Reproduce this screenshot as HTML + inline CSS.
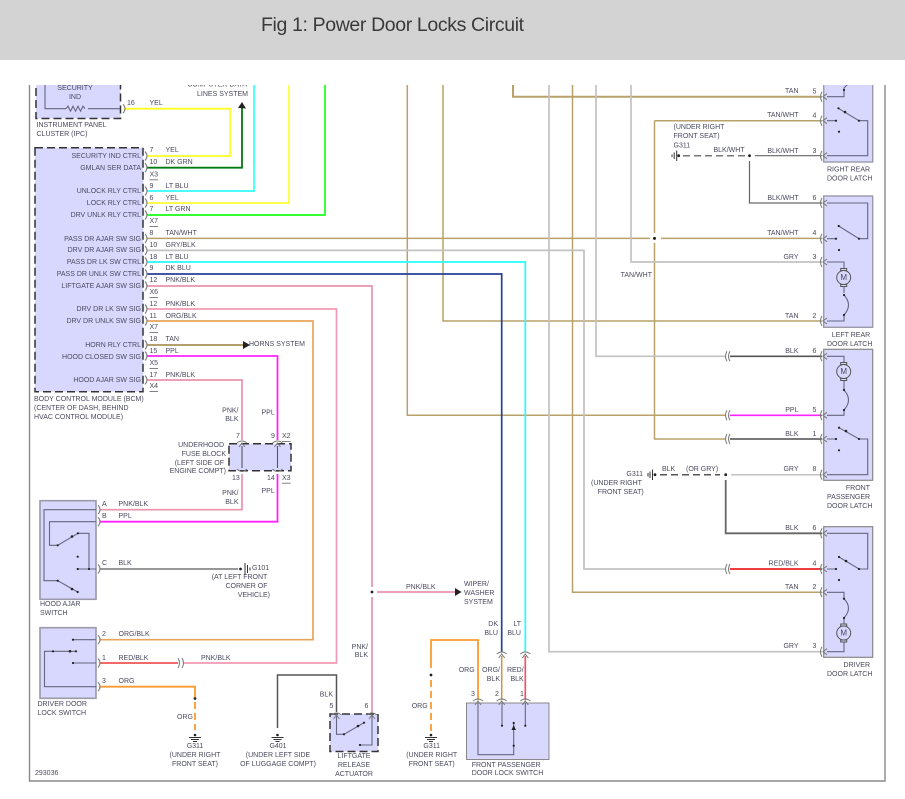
<!DOCTYPE html>
<html><head><meta charset="utf-8"><style>
html,body{margin:0;padding:0;background:#fff;width:905px;height:799px;overflow:hidden}
#h{position:absolute;left:0;top:0;width:905px;height:60px;background:#d3d3d3}
#t{position:absolute;left:261px;top:12px;font:19.5px/26px "Liberation Sans",sans-serif;letter-spacing:-.37px;color:#3a3a3a;white-space:nowrap}
svg{position:absolute;left:0;top:0;filter:blur(.3px)}
text{font-family:"Liberation Sans",sans-serif;font-size:7px;fill:#4a4a5e;dominant-baseline:central}
.e{text-anchor:end}.m{text-anchor:middle}
.w{fill:none;stroke-linejoin:miter}
</style></head><body>
<div id="h"></div><div id="t">Fig 1: Power Door Locks Circuit</div>
<svg width="905" height="799" viewBox="0 0 905 799">
<defs>
<clipPath id="c"><rect x="0" y="85" width="905" height="714"/></clipPath>
<g id="pr" fill="none" stroke="#777" stroke-width="1"><path d="M-1,-5Q-4,0 -1,5M4,-3L0,0L4,3"/></g>
<g id="pl" fill="none" stroke="#777" stroke-width="1"><path d="M-1,-4.5Q3,0 -1,4.5"/></g>
<g id="dl" fill="none" stroke="#777" stroke-width="1"><path d="M0,-5Q-3,0 0,5M3,-5Q0,0 3,5"/></g>
<g id="pu" fill="none" stroke="#777" stroke-width="1"><path d="M-5,0Q0,-4 5,0M-3,4L0,0L3,4"/></g>
<g id="gv" stroke="#333" stroke-width="1"><circle cx="0" cy="0" r="1.3" fill="#222" stroke="none"/><path d="M-6,2.5H6M-4,4.5H4M-2,6.5H2"/></g>
<g id="mot" fill="none" stroke="#555" stroke-width="1"><circle r="7"/><path d="M-3,-9H3V-7H-3ZM-3,7H3V9H-3Z"/></g>
</defs>
<g clip-path="url(#c)">
<path d="M29.5,85V781H885V85" fill="none" stroke="#8a8a8a" stroke-width="1.4"/>
<!-- boxes -->
<g fill="#d8d8ff">
<rect x="36" y="70" width="84.500" height="48.500" stroke="#333" stroke-width="1.500" stroke-dasharray="8 4"/>
<rect x="35" y="147.700" width="108" height="244" stroke="#333" stroke-width="1.500" stroke-dasharray="8 4"/>
<rect x="229" y="443.700" width="62" height="27" stroke="#333" stroke-width="1.500" stroke-dasharray="8 4"/>
<rect x="330" y="714" width="48" height="37.500" stroke="#333" stroke-width="1.500" stroke-dasharray="8 4"/>
<rect x="40" y="500.700" width="56" height="98.600" stroke="#9a9aaa" stroke-width="1.600"/>
<rect x="40" y="627.700" width="56" height="70.600" stroke="#9a9aaa" stroke-width="1.600"/>
<rect x="466.500" y="703" width="82.500" height="56.500" stroke="#888" stroke-width="1"/>
<rect x="823.700" y="60" width="49" height="102" stroke="#9a9aaa" stroke-width="1.400"/>
<rect x="823.700" y="196" width="49" height="131.300" stroke="#9a9aaa" stroke-width="1.400"/>
<rect x="823.700" y="349.300" width="49" height="131" stroke="#888" stroke-width="1.200"/>
<rect x="823.700" y="526.700" width="49" height="130.600" stroke="#888" stroke-width="1.200"/>
</g>
<!-- wires -->
<g class="w" stroke-width="1.5">
<path d="M407.300,85V415.300H725M443,85V321H822M572.500,85V592.300H822M654.500,120.700H822M654.500,120.700V233M654.500,243V439H725M147,238.400H650M661,238.400H822" stroke="#b8a26a"/>
<path d="M513,85V96.700H822" stroke="#b8a26a" stroke-width="2"/>
<path d="M549,85V651.700H822M596,85V356.300H725M631,85V262H822M147,250.400H584V569H725" stroke="#c2c2c2" stroke-width="1.700"/>
<path d="M147,262H525.300V652" stroke="#22ffff" stroke-width="1.700"/>
<path d="M147,274H501.700V652" stroke="#2a3f9a" stroke-width="1.700"/>
<path d="M147,286H372V587M372,597V713M377,592H455" stroke="#ea92ab" stroke-width="1.700"/>
<path d="M147,309H336.500V663H183" stroke="#f29ab4" stroke-width="1.700"/>
<path d="M147,321H313V639.700H100" stroke="#e8a45a" stroke-width="1.700"/>
<path d="M147,345H243" stroke="#a89058" stroke-width="1.700"/>
<path d="M147,356H277.500V440M277.500,474V521.700H100" stroke="#ff22ff" stroke-width="1.800"/>
<path d="M147,380H242V440M242,474V509.700H100" stroke="#ea92ab" stroke-width="1.700"/>
<path d="M124,108.700H230V156H147" stroke="#ffff22" stroke-width="1.800"/>
<path d="M147,167.700H242V108" stroke="#007a10" stroke-width="1.800"/>
<path d="M147,191H254V85" stroke="#33ffff" stroke-width="1.700"/>
<path d="M147,203H289V85" stroke="#ffff33" stroke-width="1.700"/>
<path d="M147,215H325V85" stroke="#33ff33" stroke-width="1.900"/>
<path d="M100,569H238" stroke="#777" stroke-width="1.500"/>
<path d="M100,663H178" stroke="#ee5555" stroke-width="1.700"/>
<path d="M100,686.700H195V697" stroke="#fb9a30" stroke-width="1.800"/>
<path d="M195,702V730" stroke="#fb9a30" stroke-width="1.800" stroke-dasharray="7 4"/>
<path d="M277.500,728V675H336.500V712" stroke="#555"/>
<path d="M431,668V640H478V700" stroke="#fb9a30" stroke-width="1.800"/>
<path d="M431,680V732" stroke="#fb9a30" stroke-width="1.800" stroke-dasharray="7 4"/>
<path d="M501.700,656V700" stroke="#c89848"/>
<path d="M525.300,656V700" stroke="#ee5566" stroke-width="1.700"/>
<path d="M683,155.700H745" stroke="#777" stroke-dasharray="7 4"/>
<path d="M755,155.700H822M749.500,161V203H822" stroke="#666" stroke-width="1.200"/>
<path d="M730,356.300H822" stroke="#555" stroke-width="1.600"/>
<path d="M730,415.300H822" stroke="#ff22ff" stroke-width="1.600"/>
<path d="M730,439H822" stroke="#666" stroke-width="1.800"/>
<path d="M731,474.700H822" stroke="#c2c2c2"/>
<path d="M660,474.700H720" stroke="#555" stroke-dasharray="7 4"/>
<path d="M725.700,480V533.300H822" stroke="#666" stroke-width="1.800"/>
<path d="M730,569H822" stroke="#ee2222" stroke-width="1.800"/>
</g>
<!-- inner wiring -->
<g fill="none" stroke="#666680" stroke-width="1.100">
<path d="M45,70V108.700H66M88,108.700H120"/>
<path d="M66,108.700l2,-2.500 2.500,5 2.500,-5 2.500,5 2.500,-5 2.500,5 2.500,-5 2,2.500"/>
<path d="M242,446V468M277.500,446V468" stroke="#555"/>
<path d="M96,509.700H44V580.700H57.700L77.700,592M96,521.700H49.500V545.300H57.700L78,533.300H89V569M78,569H96"/>
<path d="M73,639.700H96M73,663H96M96,686.700H44.500V651.300H76"/>
<path d="M478,703V754.700H513.700V723M502,703V725.700M525.300,703V725.700"/>
<path d="M336.500,714V734.300H344L364,722.700M372,714V745H360"/>
<path d="M827,96.700H844V88L850,82M827,120.700H836M838.300,108.300L859,120.700H867.700V155.700H827"/>
<path d="M827,203H867.700V238.700H859L838.700,226M827,238.700H836M827,262H844V269M844,286V293M844,295Q853,305 844,315V321H827"/>
<path d="M827,356.300H844V362M844,381V390Q853,400 844,410V415.300H827M827,439H836M839,427.700L859,439H867.700V474.700H827"/>
<path d="M827,533.300H867.700V569H859L839,557M827,569H836M827,592.300H844V598.700Q853,608 844,618V624M844,642V651.700H827"/>
</g>
<use href="#mot" x="843.700" y="277.500"/><use href="#mot" x="843.700" y="371.500"/><use href="#mot" x="843.700" y="633"/>
<!-- dots -->
<g fill="#222">
<circle cx="57.700" cy="545.300" r="1.100"/><circle cx="78" cy="533.300" r="1.100"/><circle cx="72" cy="536.500" r="1.300"/><circle cx="77.700" cy="556.700" r="1.100"/><circle cx="77.700" cy="569" r="1.100"/><circle cx="89" cy="569" r="1.100"/><circle cx="57.700" cy="580.700" r="1.100"/><circle cx="77.700" cy="592" r="1.100"/><circle cx="72" cy="589" r="1.300"/>
<circle cx="73" cy="639.700" r="1.100"/><circle cx="73" cy="663" r="1.100"/><circle cx="53" cy="651.300" r="1.100"/><circle cx="70" cy="651.300" r="1.300"/><circle cx="76" cy="651.300" r="1.100"/>
<circle cx="195" cy="698.500" r="1.400"/><circle cx="372" cy="592" r="1.400"/><circle cx="431" cy="675" r="1.400"/><circle cx="654.500" cy="238.400" r="1.500"/><circle cx="749.500" cy="155.700" r="1.400"/><circle cx="725.700" cy="474.700" r="1.400"/>
<circle cx="502" cy="725.700" r="1.100"/><circle cx="525.300" cy="725.700" r="1.100"/><circle cx="513.700" cy="723" r="1.100"/><circle cx="513.700" cy="745.700" r="1.100"/><path d="M511.500,730L513.700,725L515.900,730Z"/>
<circle cx="344" cy="734.300" r="1.100"/><circle cx="364" cy="722.700" r="1.100"/><circle cx="360" cy="745" r="1.100"/><circle cx="358" cy="726" r="1.300"/>
<circle cx="836" cy="120.700" r="1.100"/><circle cx="838.500" cy="108.300" r="1.100"/><circle cx="845" cy="112" r="1.300"/><circle cx="859" cy="120.700" r="1.100"/><circle cx="839" cy="131.700" r="1.100"/><circle cx="844" cy="90" r="1.100"/>
<circle cx="836" cy="238.700" r="1.100"/><circle cx="838.700" cy="226" r="1.100"/><circle cx="859" cy="238.700" r="1.100"/><circle cx="839" cy="250" r="1.100"/><circle cx="844" cy="295" r="1.100"/><circle cx="844" cy="315" r="1.100"/>
<circle cx="844" cy="390" r="1.100"/><circle cx="844" cy="410" r="1.100"/><circle cx="836" cy="439" r="1.100"/><circle cx="839" cy="427.700" r="1.100"/><circle cx="846" cy="431" r="1.300"/><circle cx="859" cy="439" r="1.100"/><circle cx="839" cy="450.300" r="1.100"/>
<circle cx="836" cy="569" r="1.100"/><circle cx="839" cy="557" r="1.100"/><circle cx="846" cy="561" r="1.300"/><circle cx="859" cy="569" r="1.100"/><circle cx="839" cy="580" r="1.100"/><circle cx="844" cy="598.700" r="1.100"/><circle cx="844" cy="618" r="1.100"/>
<path d="M238,108L242,102L246,108.500ZM243,341L250,345L243,349ZM455,588L461.500,592L455,596Z"/>
<circle cx="240.500" cy="569" r="1.400"/><circle cx="678.700" cy="155.700" r="1.400"/><circle cx="655" cy="474.700" r="1.400"/>
</g>
<!-- grounds -->
<use href="#gv" x="195" y="735"/><use href="#gv" x="277.500" y="735"/><use href="#gv" x="431" y="735"/>
<path d="M245,563V575M247.500,565V573M250,567.500V570.500M676.700,150.500V161M674.200,152.500V159M672,154.500V157M652.500,469.500V480M650,471.500V478M648,473V476.500" stroke="#333" stroke-width="1" fill="none"/>
<!-- connectors -->
<g>
<use href="#pl" x="124" y="108.700"/>
<use href="#pl" x="146" y="156"/><use href="#pl" x="146" y="167.700"/><use href="#pl" x="146" y="191"/><use href="#pl" x="146" y="203"/><use href="#pl" x="146" y="215"/><use href="#pl" x="146" y="238.400"/><use href="#pl" x="146" y="250.400"/><use href="#pl" x="146" y="262"/><use href="#pl" x="146" y="274"/><use href="#pl" x="146" y="286"/><use href="#pl" x="146" y="309"/><use href="#pl" x="146" y="321"/><use href="#pl" x="146" y="345"/><use href="#pl" x="146" y="356"/><use href="#pl" x="146" y="380"/>
<use href="#pl" x="99" y="509.700"/><use href="#pl" x="99" y="521.700"/><use href="#pl" x="99" y="569"/><use href="#pl" x="99" y="639.700"/><use href="#pl" x="99" y="663"/><use href="#pl" x="99" y="686.700"/>
<path d="M178,658Q181,663 178,668M182,658Q185,663 182,668" fill="none" stroke="#777"/>
<use href="#pr" x="823" y="96.700"/><use href="#pr" x="823" y="120.700"/><use href="#pr" x="823" y="155.700"/><use href="#pr" x="823" y="203"/><use href="#pr" x="823" y="238.700"/><use href="#pr" x="823" y="262"/><use href="#pr" x="823" y="321"/><use href="#pr" x="823" y="356.300"/><use href="#pr" x="823" y="415.300"/><use href="#pr" x="823" y="439"/><use href="#pr" x="823" y="474.700"/><use href="#pr" x="823" y="533.300"/><use href="#pr" x="823" y="569"/><use href="#pr" x="823" y="592.300"/><use href="#pr" x="823" y="651.700"/>
<use href="#dl" x="727" y="356.300"/><use href="#dl" x="727" y="415.300"/><use href="#dl" x="727" y="439"/><use href="#dl" x="727" y="569"/>
<use href="#pu" x="478" y="701"/><use href="#pu" x="501.700" y="701"/><use href="#pu" x="525.300" y="701"/><use href="#pu" x="501.700" y="654"/><use href="#pu" x="525.300" y="654"/><use href="#pu" x="336.500" y="715"/><use href="#pu" x="372" y="715"/><use href="#pu" x="242" y="443"/><use href="#pu" x="277.500" y="443"/><path d="M237,469Q242,474 247,469M272.500,469Q277.500,474 282.500,469" fill="none" stroke="#777"/>
</g>
<!-- text -->
<g>
<text class="m" x="75" y="88.700">SECURITY</text><text class="m" x="75" y="97.700">IND</text>
<text x="36.500" y="125.300">INSTRUMENT PANEL</text><text x="36.500" y="134.300">CLUSTER (IPC)</text>
<text class="e" x="247" y="85">COMPUTER DATA</text><text class="e" x="248" y="94.300">LINES SYSTEM</text>
<text x="127" y="103.500">16</text><text x="149.500" y="103.500">YEL</text>
<text class="e" x="141" y="156.300">SECURITY IND CTRL</text><text class="e" x="141" y="168.300">GMLAN SER DATA</text><text class="e" x="141" y="191.300">UNLOCK RLY CTRL</text><text class="e" x="141" y="203.300">LOCK RLY CTRL</text><text class="e" x="141" y="215.300">DRV UNLK RLY CTRL</text><text class="e" x="141" y="239.300">PASS DR AJAR SW SIG</text><text class="e" x="141" y="250.300">DRV DR AJAR SW SIG</text><text class="e" x="141" y="262.300">PASS DR LK SW CTRL</text><text class="e" x="141" y="274.300">PASS DR UNLK SW CTRL</text><text class="e" x="141" y="286.300">LIFTGATE AJAR SW SIG</text><text class="e" x="141" y="309.300">DRV DR LK SW SIG</text><text class="e" x="141" y="321.300">DRV DR UNLK SW SIG</text><text class="e" x="141" y="345.300">HORN RLY CTRL</text><text class="e" x="141" y="357.300">HOOD CLOSED SW SIG</text><text class="e" x="141" y="380.300">HOOD AJAR SW SIG</text>
<text x="149.500" y="150.300">7</text><text x="165.500" y="150.300">YEL</text><text x="149.500" y="162.700">10</text><text x="165.500" y="162.700">DK GRN</text><text x="149.500" y="175" text-decoration="underline">X3</text>
<text x="149.500" y="186.300">9</text><text x="165.500" y="186.300">LT BLU</text><text x="149.500" y="198.300">6</text><text x="165.500" y="198.300">YEL</text><text x="149.500" y="209.700">7</text><text x="165.500" y="209.700">LT GRN</text><text x="149.500" y="221.700" text-decoration="underline">X7</text>
<text x="149.500" y="233.300">8</text><text x="165.500" y="233.300">TAN/WHT</text><text x="149.500" y="245.300">10</text><text x="165.500" y="245.300">GRY/BLK</text><text x="149.500" y="257.300">18</text><text x="165.500" y="257.300">LT BLU</text><text x="149.500" y="268.700">9</text><text x="165.500" y="268.700">DK BLU</text><text x="149.500" y="280.300">12</text><text x="165.500" y="280.300">PNK/BLK</text><text x="149.500" y="292.700" text-decoration="underline">X6</text>
<text x="149.500" y="304.300">12</text><text x="165.500" y="304.300">PNK/BLK</text><text x="149.500" y="316.300">11</text><text x="165.500" y="316.300">ORG/BLK</text><text x="149.500" y="327.700" text-decoration="underline">X7</text>
<text x="149.500" y="339.700">18</text><text x="165.500" y="339.700">TAN</text><text x="249" y="344.700">HORNS SYSTEM</text><text x="149.500" y="351.700">15</text><text x="165.500" y="351.700">PPL</text><text x="149.500" y="363.700" text-decoration="underline">X5</text>
<text x="149.500" y="375.300">17</text><text x="165.500" y="375.300">PNK/BLK</text><text x="149.500" y="386.700" text-decoration="underline">X4</text>
<text x="34" y="399.300">BODY CONTROL MODULE (BCM)</text><text x="34" y="408.300">(CENTER OF DASH, BEHIND</text><text x="34" y="417.300">HVAC CONTROL MODULE)</text>
<text class="e" x="238.500" y="411">PNK/</text><text class="e" x="238.500" y="419.700">BLK</text><text x="261.500" y="413">PPL</text>
<text class="e" x="224" y="445.300">UNDERHOOD</text><text class="e" x="226" y="454.300">FUSE BLOCK</text><text class="e" x="224" y="463.300">(LEFT SIDE OF</text><text class="e" x="226" y="471.300">ENGINE COMPT)</text>
<text x="236" y="436.700">7</text><text x="271" y="436.700">9</text><text x="282" y="436.700" text-decoration="underline">X2</text><text x="232" y="478.300">13</text><text x="267" y="478.300">14</text><text x="282" y="478.300" text-decoration="underline">X3</text>
<text class="e" x="238.500" y="493.300">PNK/</text><text class="e" x="238.500" y="502.300">BLK</text><text x="261.500" y="491.300">PPL</text>
<text x="102" y="504.300">A</text><text x="118.500" y="504.300">PNK/BLK</text><text x="102" y="516.300">B</text><text x="118.500" y="516.300">PPL</text><text x="102" y="563.300">C</text><text x="118.500" y="563.300">BLK</text>
<text x="252" y="568.700">G101</text><text x="211.700" y="577.700">(AT LEFT FRONT</text><text class="e" x="267.500" y="586.300">CORNER OF</text><text class="e" x="270" y="595.300">VEHICLE)</text>
<text x="40" y="604.300">HOOD AJAR</text><text x="40" y="613.300">SWITCH</text>
<text x="102" y="634.700">2</text><text x="118.500" y="634.700">ORG/BLK</text><text x="102" y="658.300">1</text><text x="118.500" y="658.300">RED/BLK</text><text x="201" y="658.300">PNK/BLK</text><text x="102" y="681.300">3</text><text x="118.500" y="681.300">ORG</text>
<text x="37.500" y="704.300">DRIVER DOOR</text><text x="37.500" y="713.300">LOCK SWITCH</text><text class="e" x="193" y="717.300">ORG</text>
<text class="m" x="195" y="746.300">G311</text><text class="m" x="195" y="755.300">(UNDER RIGHT</text><text class="m" x="195" y="764.300">FRONT SEAT)</text>
<text class="m" x="278" y="746.300">G401</text><text class="m" x="278" y="755.300">(UNDER LEFT SIDE</text><text class="m" x="278" y="764.300">OF LUGGAGE COMPT)</text>
<text x="35" y="773.300">293036</text>
<text class="e" x="333" y="695">BLK</text><text x="329.500" y="706.700">5</text><text x="364.500" y="706.700">6</text>
<text class="m" x="354" y="756.300">LIFTGATE</text><text class="m" x="354" y="765.300">RELEASE</text><text class="m" x="354" y="774.300">ACTUATOR</text>
<text class="e" x="368" y="647.500">PNK/</text><text class="e" x="368" y="655.500">BLK</text>
<text x="406" y="587.500">PNK/BLK</text><text x="464" y="584.300">WIPER/</text><text x="464" y="593.500">WASHER</text><text x="464" y="602.500">SYSTEM</text>
<text class="e" x="427.700" y="706.300">ORG</text><text class="m" x="431.700" y="746.300">G311</text><text class="m" x="431.700" y="755.300">(UNDER RIGHT</text><text class="m" x="431.700" y="764.300">FRONT SEAT)</text>
<text class="e" x="474.700" y="670.300">ORG</text><text class="e" x="500" y="670.300">ORG/</text><text class="e" x="500" y="679.300">BLK</text><text class="e" x="523.700" y="670.300">RED/</text><text class="e" x="523.700" y="679.300">BLK</text>
<text class="e" x="498" y="624.300">DK</text><text class="e" x="498" y="633.300">BLU</text><text class="e" x="521" y="624.300">LT</text><text class="e" x="521" y="633.300">BLU</text>
<text x="471" y="694.300">3</text><text x="495" y="694.300">2</text><text x="520" y="694.300">1</text>
<text x="471.700" y="765.300">FRONT PASSENGER</text><text x="471.700" y="773.700">DOOR LOCK SWITCH</text>
<text class="e" x="798.500" y="91.700">TAN</text><text x="812.500" y="92">5</text><text class="e" x="798.500" y="115.700">TAN/WHT</text><text x="812.500" y="116">4</text>
<text x="673.500" y="127.300">(UNDER RIGHT</text><text x="673.500" y="136.300">FRONT SEAT)</text><text x="673.500" y="146">G311</text><text x="713.500" y="150.700">BLK/WHT</text>
<text class="e" x="798.500" y="151.500">BLK/WHT</text><text x="812.500" y="151.500">3</text><text class="e" x="798.500" y="198.500">BLK/WHT</text><text x="812.500" y="198.500">6</text><text class="e" x="798.500" y="233.500">TAN/WHT</text><text x="812.500" y="233.500">4</text><text class="e" x="798.500" y="257.500">GRY</text><text x="812.500" y="257.500">3</text><text class="e" x="798.500" y="316.500">TAN</text><text x="812.500" y="316.500">2</text>
<text class="e" x="652" y="275.300">TAN/WHT</text>
<text x="827" y="170">RIGHT REAR</text><text x="827" y="179">DOOR LATCH</text><text class="m" x="851" y="335.700">LEFT REAR</text><text x="827" y="344.500">DOOR LATCH</text>
<text class="e" x="798.500" y="351.700">BLK</text><text x="812.500" y="351.700">6</text><text class="e" x="798.500" y="410.500">PPL</text><text x="812.500" y="410.500">5</text><text class="e" x="798.500" y="434.500">BLK</text><text x="812.500" y="434.500">1</text><text class="e" x="798.500" y="469.500">GRY</text><text x="812.500" y="469.500">8</text>
<text class="e" x="870" y="488.300">FRONT</text><text x="827" y="497.500">PASSENGER</text><text x="827" y="506.500">DOOR LATCH</text>
<text class="e" x="643" y="474.300">G311</text><text x="591" y="483.300">(UNDER RIGHT</text><text x="597.700" y="492.300">FRONT SEAT)</text><text x="662" y="469.300">BLK</text><text x="686" y="469.300">(OR GRY)</text>
<text class="e" x="798.500" y="528.500">BLK</text><text x="812.500" y="528.500">6</text><text class="e" x="798.500" y="564">RED/BLK</text><text x="812.500" y="564">4</text><text class="e" x="798.500" y="587.500">TAN</text><text x="812.500" y="587.500">2</text><text class="e" x="798.500" y="646.500">GRY</text><text x="812.500" y="646.500">3</text>
<text class="e" x="870" y="665.700">DRIVER</text><text x="827" y="674.700">DOOR LATCH</text>
<text class="m" x="843.700" y="277.500" style="font-size:8px">M</text><text class="m" x="843.700" y="371.500" style="font-size:8px">M</text><text class="m" x="843.700" y="633" style="font-size:8px">M</text>
</g>
</g>
</svg>
</body></html>
